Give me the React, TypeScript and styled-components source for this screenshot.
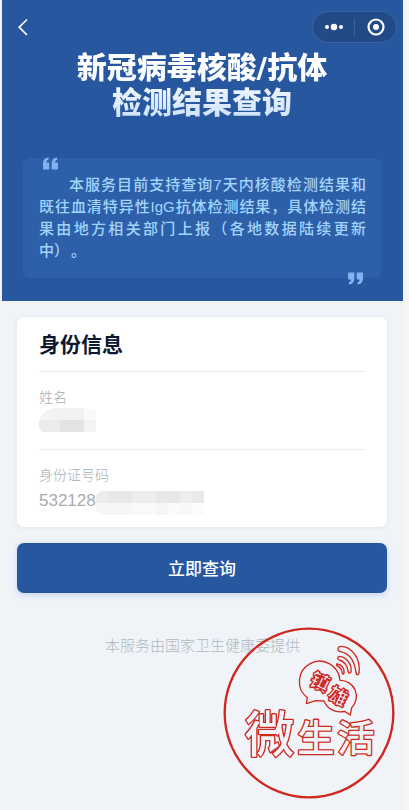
import React from 'react';
import styled, { createGlobalStyle } from 'styled-components';

const GlobalStyle = createGlobalStyle`
  * { box-sizing: border-box; }
  body {
    margin: 0;
    background: #f5f5f6;
    font-family: 'Liberation Sans', 'Noto Sans CJK SC', sans-serif;
  }
  button, input { font-family: inherit; }
`;

const Page = styled.div`
  min-height: 100vh;
  margin: 0 6px 0 2px;
  background: #f0f4f8;
`;

const Header = styled.header`
  background: #27579f;
  padding: 0 22px 23px 21px;
`;

const NavBar = styled.nav`
  display: flex;
  align-items: center;
  justify-content: space-between;
  height: 50px;
  margin: 0 -16px 0 -8px;
  padding-top: 4px;
`;

const BackButton = styled.button`
  display: flex;
  padding: 0;
  border: 0;
  background: none;
  color: #fff;
`;

const Capsule = styled.div`
  display: flex;
  align-items: center;
  width: 85px;
  height: 32px;
  border: 1px solid #3964a5;
  border-radius: 16px;
  background: #224a87;
`;

const CapsuleButton = styled.button<{ $divided?: boolean }>`
  display: flex;
  flex: 1;
  align-items: center;
  justify-content: center;
  height: 18px;
  padding: 0;
  border: 0;
  border-left: ${(p) => (p.$divided ? '1px solid #3c60a0' : '0')};
  background: none;
`;

const Title = styled.h1`
  margin: 0;
  text-align: center;
  font: 900 30px/35px Roboto, 'Noto Sans CJK SC', sans-serif;
  color: transparent;
  background: linear-gradient(#ffffff 20%, #f4f9ff 45%, #d3e5fc 90%);
  background-clip: text;
  -webkit-background-clip: text;
`;

const Notice = styled.section`
  position: relative;
  margin-top: 38px;
  padding: 16px 15px 16px 16px;
  border-radius: 7px;
  background: #2e60aa;
`;

const NoticeText = styled.p`
  margin: 0;
  color: #a3d4fc;
  font-size: 15px;
  font-weight: 500;
  line-height: 22px;
`;

const NoticeLine = styled.span<{ $first?: boolean; $last?: boolean }>`
  display: block;
  text-align: justify;
  text-align-last: ${(p) => (p.$last ? 'left' : 'justify')};
  text-indent: ${(p) => (p.$first ? '2em' : '0')};
`;

const FullStop = styled.span`
  display: inline-block;
  margin-left: 2px;
`;

const QuoteMark = styled.svg<{ $end?: boolean }>`
  position: absolute;
  ${(p) => (p.$end ? 'right: 18px; bottom: -7px;' : 'left: 20px; top: -1px;')}
  fill: #83b2f0;
`;

const Card = styled.section`
  margin: 16px 16px 0 15px;
  padding: 0 21px 0 22px;
  border-radius: 7px;
  background: #fff;
  box-shadow: 0 1px 5px rgba(60, 80, 100, 0.09);
`;

const CardTitle = styled.h2`
  margin: 0;
  padding: 12px 0 10px;
  color: #0d1730;
  font-size: 21px;
  font-weight: 700;
  line-height: 32px;
`;

const Field = styled.div`
  position: relative;
  display: flex;
  flex-direction: column;
  height: 78px;
  padding-top: 14px;
  border-top: 1px solid #ededee;
`;

const Label = styled.label`
  color: #aaacb0;
  font-size: 14px;
  font-weight: 300;
  line-height: 22px;
`;

const TextInput = styled.input`
  width: 100%;
  height: 28px;
  padding: 2px 0 0;
  border: 0;
  outline: 0;
  background: none;
  color: #a9abb0;
  font-size: 17px;
`;

const Mosaic = styled.svg<{ $shift?: boolean }>`
  position: absolute;
  top: ${(p) => (p.$shift ? '41px' : '36px')};
  left: ${(p) => (p.$shift ? '56px' : '0')};
`;

const Submit = styled.button`
  display: block;
  width: calc(100% - 31px);
  height: 50px;
  margin: 16px 16px 0 15px;
  padding: 0 0 2px;
  border: 0;
  border-radius: 7px;
  background: #27579f;
  color: #fff;
  font-size: 17px;
  font-weight: 500;
  box-shadow: 0 2px 6px rgba(70, 120, 255, 0.25);
`;

const Footer = styled.footer`
  position: relative;
  padding-top: 42px;
  color: #b0b8be;
  font-size: 15px;
  font-weight: 300;
  line-height: 22px;
  text-align: center;
`;

const Stamp = styled.svg`
  position: absolute;
  top: 33px;
  right: 7px;
  fill: none;
  stroke: #cf281f;
  font-family: 'Noto Sans CJK SC', sans-serif;
`;

const StampText = styled.text`
  font-weight: 500;
  fill: #f0f4f8;
  stroke-width: 8px;
  stroke-linejoin: round;
  paint-order: stroke;
`;

const LargeStampText = styled(StampText)`
  font-size: 148px;
`;

const MediumStampText = styled(StampText)`
  font-size: 112px;
`;

const SmallStampText = styled(StampText)`
  font-size: 60px;
  font-weight: 900;
  stroke-width: 4px;
  paint-order: normal;
`;

const nameCells = [
  [0, 0, 21, '#f3f3f4'], [21, 0, 24, '#f1f2f3'], [45, 0, 12, '#fafafa'],
  [0, 12, 21, '#ebebec'], [21, 12, 24, '#e2e3e5'], [45, 12, 12, '#f3f3f4'],
] as const;

const idCells = [
  [0, 0, 13, '#ececed'], [13, 0, 24, '#e8e8ea'], [37, 0, 24, '#ededee'],
  [61, 0, 24, '#e8e8ea'], [85, 0, 12, '#eeeeef'], [97, 0, 12, '#e9e9eb'],
  [0, 12, 13, '#f5f5f5'], [13, 12, 24, '#f6f6f6'], [37, 12, 24, '#f9f9f9'],
  [61, 12, 12, '#f4f5f5'], [73, 12, 12, '#fafafa'], [85, 12, 12, '#f7f9f8'], [97, 12, 12, '#fafbfa'],
] as const;

function Quote({ end }: { end?: boolean }) {
  return (
    <QuoteMark $end={end} width="15" height="13" viewBox="0 0 15 13" aria-hidden="true">
      <g transform={end ? 'rotate(180 7.5 6.5)' : undefined}>
        <path d="M5.5 0.5V2.8C4 3 3.4 4.2 3.4 5.6H6.2V12.5H0V6.5C0 3 1.8 0.8 5.5 0.5Z" />
        <path d="M14.2 0.5V2.8C12.7 3 12.1 4.2 12.1 5.6H14.9V12.5H8.7V6.5C8.7 3 10.5 0.8 14.2 0.5Z" />
      </g>
    </QuoteMark>
  );
}

export default function App() {
  return (
    <>
      <GlobalStyle />
      <Page>
        <Header>
          <NavBar>
            <BackButton aria-label="返回">
              <svg width="16" height="20" viewBox="0 0 16 20" fill="none" stroke="currentColor" strokeWidth="1.7">
                <path d="M12 2.5L4.2 10.2L12 18" />
              </svg>
            </BackButton>
            <Capsule>
              <CapsuleButton aria-label="更多">
                <svg width="20" height="8" viewBox="0 0 20 8" fill="#fff">
                  <circle cx="3" cy="4" r="2" />
                  <circle cx="10" cy="4" r="3.2" />
                  <circle cx="17" cy="4" r="2" />
                </svg>
              </CapsuleButton>
              <CapsuleButton $divided aria-label="关闭">
                <svg width="18" height="18" viewBox="0 0 18 18" fill="none" stroke="#fff" strokeWidth="2.2">
                  <circle cx="9" cy="9" r="7.5" />
                  <circle cx="9" cy="9" r="3" fill="#fff" stroke="none" />
                </svg>
              </CapsuleButton>
            </Capsule>
          </NavBar>
          <Title>新冠病毒核酸/抗体<br />检测结果查询</Title>
          <Notice>
            <Quote />
            <NoticeText>
              <NoticeLine $first>本服务目前支持查询7天内核酸检测结果和</NoticeLine>
              <NoticeLine>既往血清特异性IgG抗体检测结果，具体检测结</NoticeLine>
              <NoticeLine>果由地方相关部门上报（各地数据陆续更新</NoticeLine>
              <NoticeLine $last>中）<FullStop>。</FullStop></NoticeLine>
            </NoticeText>
            <Quote end />
          </Notice>
        </Header>

        <Card>
          <CardTitle>身份信息</CardTitle>
          <Field>
            <Label htmlFor="name">姓名</Label>
            <TextInput id="name" type="text" />
            <Mosaic width="57" height="24" viewBox="0 0 57 24" aria-hidden="true">
              <clipPath id="nameMask"><path d="M0 14C1 6 8 0 20 0H38C48 0 57 1 57 4V24H3L0 20Z" /></clipPath>
              <g clipPath="url(#nameMask)">
                {nameCells.map(([x, y, w, c]) => <rect key={`${x}-${y}`} x={x} y={y} width={w} height="12" fill={c} />)}
              </g>
            </Mosaic>
          </Field>
          <Field>
            <Label htmlFor="idno">身份证号码</Label>
            <TextInput id="idno" type="text" defaultValue="532128" />
            <Mosaic $shift width="109" height="24" viewBox="0 0 109 24" aria-hidden="true">
              <clipPath id="idMask"><path d="M6 0H109V24H8C2 22 0 18 0 12C0 6 2 2 6 0Z" /></clipPath>
              <g clipPath="url(#idMask)">
                {idCells.map(([x, y, w, c]) => <rect key={`${x}-${y}`} x={x} y={y} width={w} height="12" fill={c} />)}
              </g>
            </Mosaic>
          </Field>
        </Card>

        <Submit type="submit">立即查询</Submit>

        <Footer>
          本服务由国家卫生健康委提供
          <Stamp width="174" height="174" viewBox="22 19 522 522" role="img" aria-label="镇雄微生活">
            <circle cx="283" cy="280" r="253" strokeWidth="7" />
            <g strokeWidth="4" strokeLinejoin="round">
              <path d="M275 252L278 234A61 61 0 1 1 376 182A48 48 0 0 1 411 264L407 286L390 275C362 281 338 268 328 244L303 243Z" />
              <path d="M377 80C411 79 439 117 433 161C431 167 426 167 424 160C420 125 405 101 377 96C367 93 368 82 377 80Z" />
              <path d="M374 110C396 112 413 135 409 157C407 162 402 161 401 157C398 137 389 125 374 121C367 118 368 111 374 110Z" />
              <path d="M366 133C381 134 391 148 388 162C386 165 384 163 383 160C381 148 375 142 366 138Z" />
            </g>
            <SmallStampText x="-30" y="22" transform="translate(316 187) rotate(26)">镇</SmallStampText>
            <SmallStampText x="-30" y="22" transform="translate(370 229) rotate(26)">雄</SmallStampText>
            <LargeStampText x="91" y="397">微</LargeStampText>
            <MediumStampText x="248" y="397">生</MediumStampText>
            <MediumStampText x="368" y="397">活</MediumStampText>
          </Stamp>
        </Footer>
      </Page>
    </>
  );
}
